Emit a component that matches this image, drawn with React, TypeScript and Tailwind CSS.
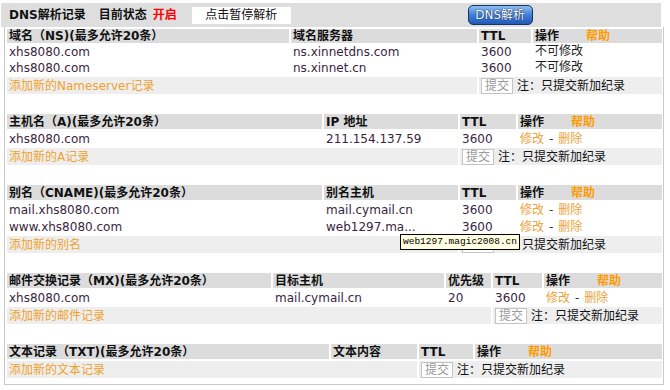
import React from "react";

type Sec = {
  cols: string;
  head: string[];
  rows: string[][];
  ops: "fixed" | "edit";
  add: string;
  spanA: string;
  rowH: string;
  tip?: boolean;
};

const sections: Sec[] = [
  {
    cols: "grid-cols-[282px_186px_52px_1fr]",
    head: ["域名（NS)(最多允许20条）", "域名服务器", "TTL"],
    rows: [
      ["xhs8080.com", "ns.xinnetdns.com", "3600"],
      ["xhs8080.com", "ns.xinnet.cn", "3600"],
    ],
    ops: "fixed",
    add: "添加新的Nameserver记录",
    spanA: "col-span-2",
    rowH: "h-[14px]",
  },
  {
    cols: "grid-cols-[315px_134px_56px_1fr]",
    head: ["主机名（A)(最多允许20条）", "IP 地址", "TTL"],
    rows: [["xhs8080.com", "211.154.137.59", "3600"]],
    ops: "edit",
    add: "添加新的A记录",
    spanA: "col-span-2",
    rowH: "h-[15px]",
  },
  {
    cols: "grid-cols-[315px_134px_56px_1fr]",
    head: ["别名（CNAME)(最多允许20条）", "别名主机", "TTL"],
    rows: [
      ["mail.xhs8080.com", "mail.cymail.cn", "3600"],
      ["www.xhs8080.com", "web1297.ma...", "3600"],
    ],
    ops: "edit",
    add: "添加新的别名",
    spanA: "col-span-2",
    rowH: "h-[15px]",
    tip: true,
  },
  {
    cols: "grid-cols-[264px_171px_45px_49px_1fr]",
    head: ["邮件交换记录（MX)(最多允许20条）", "目标主机", "优先级", "TTL"],
    rows: [["xhs8080.com", "mail.cymail.cn", "20", "3600"]],
    ops: "edit",
    add: "添加新的邮件记录",
    spanA: "col-span-3",
    rowH: "h-[15px]",
  },
  {
    cols: "grid-cols-[322px_86px_54px_1fr]",
    head: ["文本记录（TXT)(最多允许20条）", "文本内容", "TTL"],
    rows: [],
    ops: "edit",
    add: "添加新的文本记录",
    spanA: "col-span-2",
    rowH: "h-[15px]",
  },
];

function Section({ s, first }: { s: Sec; first: boolean }) {
  const headH = first ? "h-[14px]" : "h-[15px]";
  return (
    <div className={`relative grid gap-[2px] ${s.cols} ${first ? "" : "mt-[20px]"}`}>
      {s.head.map((h) => (
        <div key={h} className={`${headH} flex items-center bg-[#dcdcdc] pl-[2px] font-bold text-[#111]`}>
          {h}
        </div>
      ))}
      <div className={`${headH} flex items-center bg-[#dcdcdc] pl-[2px] font-bold text-[#111]`}>
        <span>操作</span>
        <span className="ml-[27px] text-[#ff9900]">帮助</span>
      </div>

      {s.rows.map((r, i) => (
        <React.Fragment key={i}>
          {r.map((c, j) => (
            <div key={j} className={`${s.rowH} flex items-center pl-[2px] text-[#3a2540]`}>
              {c}
            </div>
          ))}
          {s.ops === "fixed" ? (
            <div className={`${s.rowH} flex items-start pl-[2px] text-[#222]`}>不可修改</div>
          ) : (
            <div className={`${s.rowH} flex items-center pl-[2px]`}>
              <span className="text-[#eba33a]">修改</span>
              <span className="px-[5px] text-[#333]">-</span>
              <span className="text-[#eba33a]">删除</span>
            </div>
          )}
        </React.Fragment>
      ))}

      <div className={`${s.spanA} flex h-[17px] items-center bg-[#eeeeee] pl-[2px] text-[#eea22c]`}>
        {s.add}
      </div>
      <div className="col-span-2 flex h-[17px] items-center bg-[#eeeeee] pl-[2px]">
        <span className="flex h-[16px] w-[32px] items-center justify-center border border-[#c4c4c4] bg-white text-[#9a9a9a]">
          提交
        </span>
        <span className="ml-[4px] text-[#111]">注：只提交新加纪录</span>
      </div>

      {s.tip && (
        <div className="absolute left-[393px] top-[49px] border border-black bg-[#ffffe1] px-[2px] py-[1px] font-['Liberation_Mono',monospace] text-[9.5px] leading-[12px] text-black">
          web1297.magic2008.cn
        </div>
      )}
    </div>
  );
}

export default function App() {
  return (
    <div className="w-[670px] bg-white pl-[1px] pt-[3px] font-['DejaVu_Sans','Noto_Sans_CJK_SC',sans-serif] text-[12px] leading-none">
      <div className="flex h-[24px] w-[660px] items-center bg-[#dedede] pl-[8px]">
        <span className="font-bold text-[#111]">DNS解析记录</span>
        <span className="ml-[13px] font-bold text-[#111]">目前状态</span>
        <span className="ml-[6px] font-bold text-[#ff0000]">开启</span>
        <span className="ml-[15px] flex h-[17px] w-[99px] items-center justify-center bg-white text-[#111]">
          点击暂停解析
        </span>
        <span className="ml-[177px] flex h-[20px] w-[65px] items-center justify-center rounded-[5px] border border-[#163462] bg-gradient-to-b from-[#8fc0f4] via-[#3f7fd8] to-[#2358b8] text-white [text-shadow:0_0_1px_#0c2450,0_0_1px_#0c2450]">
          DNS解析
        </span>
      </div>
      <div className="ml-[3px] w-[660px] border-x border-b border-[#c8c8c8] pb-[6px] pl-[2px] pr-[1px] pt-[2px]">
        {sections.map((s, i) => (
          <Section key={i} s={s} first={i === 0} />
        ))}
      </div>
    </div>
  );
}
